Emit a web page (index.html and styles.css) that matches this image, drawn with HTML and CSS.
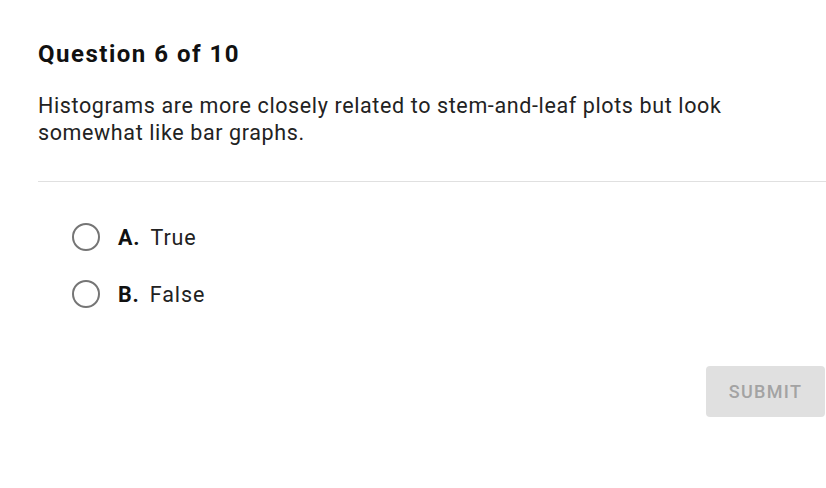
FILE: index.html
```html
<!DOCTYPE html>
<html>
<head>
<meta charset="utf-8">
<link rel="stylesheet" href="styles.css">
</head>
<body>
<div class="page">
  <h1 class="title">Question 6 of 10</h1>
  <p class="question">Histograms are more closely related to stem-and-leaf plots but look somewhat like bar graphs.</p>
  <div class="divider"></div>
  <div class="options">
    <label class="option">
      <span class="radio"></span>
      <span class="letter">A.</span>
      <span class="text">True</span>
    </label>
    <label class="option">
      <span class="radio"></span>
      <span class="letter">B.</span>
      <span class="text">False</span>
    </label>
  </div>
  <div class="actions">
    <button class="submit">SUBMIT</button>
  </div>
</div>
</body>
</html>
```
FILE: styles.css
```css
html, body {
  margin: 0;
  padding: 0;
  background: #ffffff;
}
body {
  font-family: Roboto, "Liberation Sans", sans-serif;
  color: #1a1a1a;
}
.page {
  padding: 39px 0 0 38px;
}
.title {
  margin: 0;
  font-size: 24px;
  font-weight: 700;
  letter-spacing: 1.5px;
  line-height: 30px;
  color: #111;
}
.question {
  margin: 23px 0 0 0;
  max-width: 740px;
  font-size: 21.5px;
  letter-spacing: 0.62px;
  line-height: 27px;
  color: #222;
}
.divider {
  margin-top: 35px;
  height: 1px;
  background: #e0e0e0;
}
.options {
  display: flex;
  flex-direction: column;
  gap: 31px;
  padding: 42px 0 0 34px;
}
.option {
  display: flex;
  align-items: center;
  height: 26px;
  font-size: 21.5px;
  letter-spacing: 0.9px;
  color: #222;
}
.radio {
  box-sizing: border-box;
  width: 28px;
  height: 28px;
  border: 2.5px solid #757575;
  border-radius: 50%;
  margin-right: 18px;
}
.letter {
  font-weight: 700;
  margin-right: 10px;
  color: #111;
}
.actions {
  display: flex;
  justify-content: flex-end;
  margin-top: 59px;
  padding-right: 1px;
}
.submit {
  width: 119px;
  height: 51px;
  border: none;
  border-radius: 4px;
  background: #e0e0e0;
  color: #a3a3a3;
  font-family: Roboto, "Liberation Sans", sans-serif;
  font-size: 18px;
  font-weight: 500;
  letter-spacing: 1.3px;
}
```
